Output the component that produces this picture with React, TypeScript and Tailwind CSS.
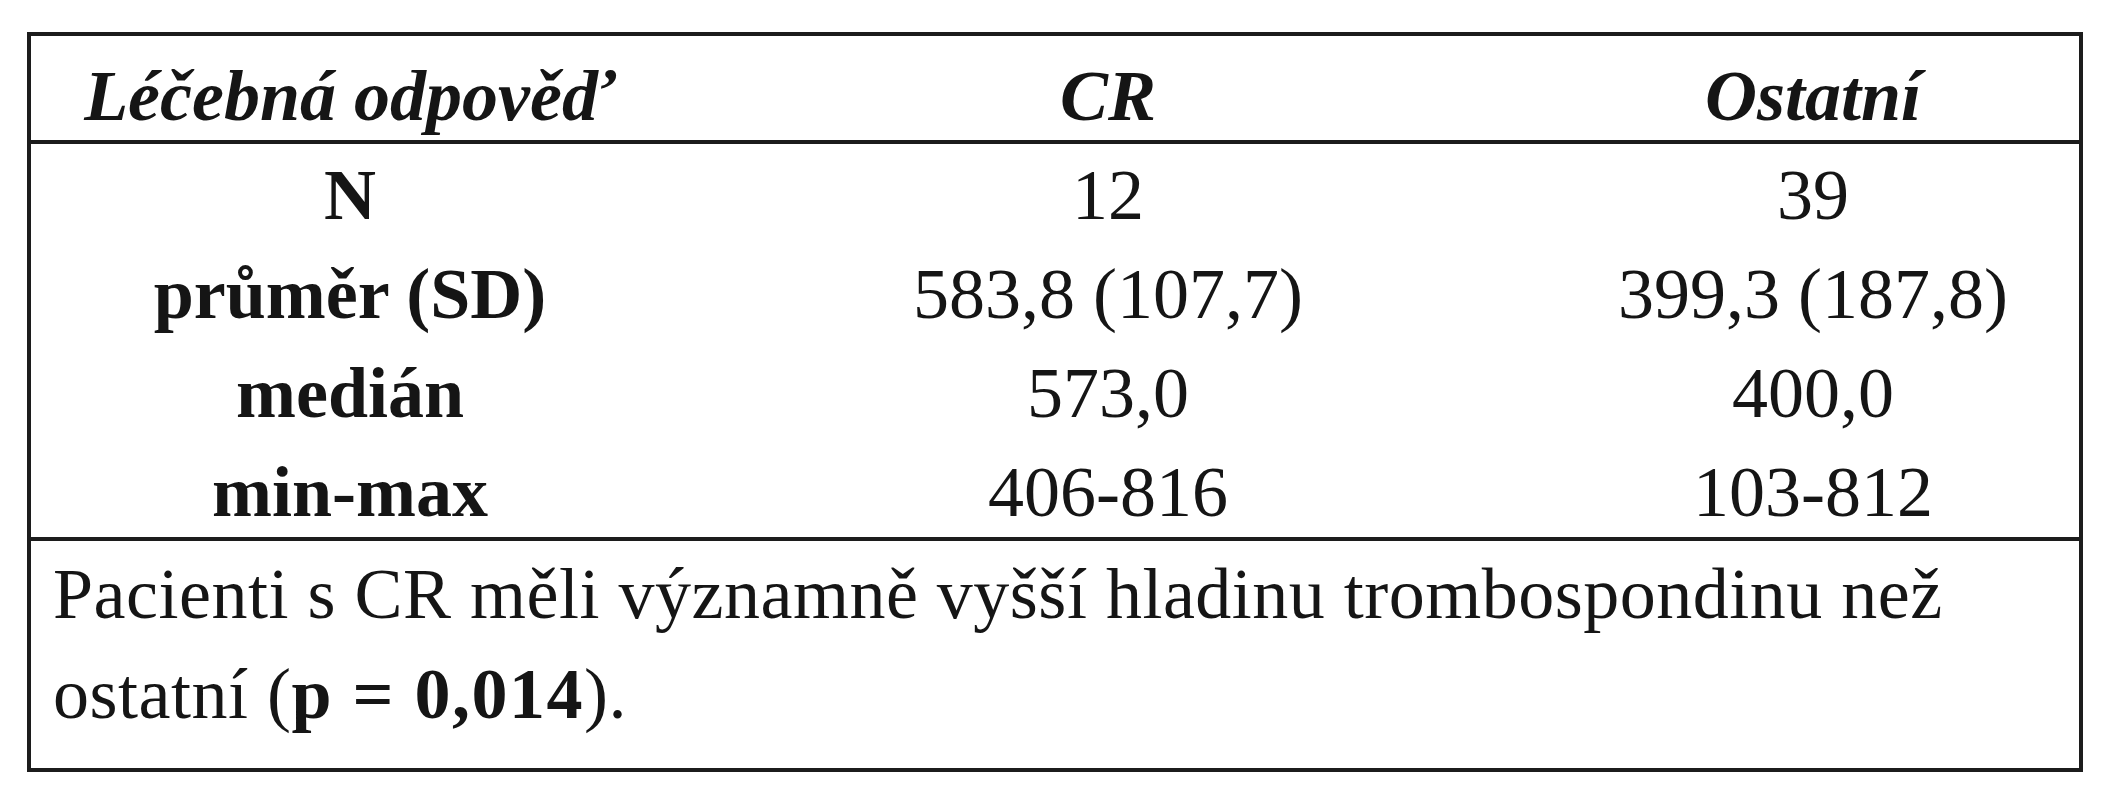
const rows = [
  { label: 'N', cr: '12', other: '39' },
  { label: 'průměr (SD)', cr: '583,8 (107,7)', other: '399,3 (187,8)' },
  { label: 'medián', cr: '573,0', other: '400,0' },
  { label: 'min-max', cr: '406-816', other: '103-812' },
];

export default function App() {
  return (
    <div className="w-[2115px] h-[800px] bg-white pt-[32px] pl-[27px] text-[#151515] font-['Liberation_Serif','Times_New_Roman',serif] text-[72px]">
      <div className="w-[2056px] h-[740px] border-[4px] border-[#1c1c1c] flex flex-col">
        {/* header */}
        <div className="h-[108px] border-b-[4px] border-[#1c1c1c] grid grid-cols-[638px_878px_1fr] pt-[16px] leading-[88px] font-bold italic">
          <div className="text-center">Léčebná odpověď</div>
          <div className="text-center">CR</div>
          <div className="text-center">Ostatní</div>
        </div>

        {/* values */}
        <div className="h-[397px] border-b-[4px] border-[#1c1c1c] pt-[2px]">
          {rows.map((r) => (
            <div key={r.label} className="grid grid-cols-[638px_878px_1fr] leading-[99px] h-[99px]">
              <div className="text-center font-bold">{r.label}</div>
              <div className="text-center">{r.cr}</div>
              <div className="text-center">{r.other}</div>
            </div>
          ))}
        </div>

        {/* note */}
        <div className="pt-[3px] pl-[22px] leading-[100px] tracking-[0.5px]">
          Pacienti s CR měli významně vyšší hladinu trombospondinu než
          <br />
          ostatní (<b className="tracking-[1.5px]">p = 0,014</b>).
        </div>
      </div>
    </div>
  );
}
